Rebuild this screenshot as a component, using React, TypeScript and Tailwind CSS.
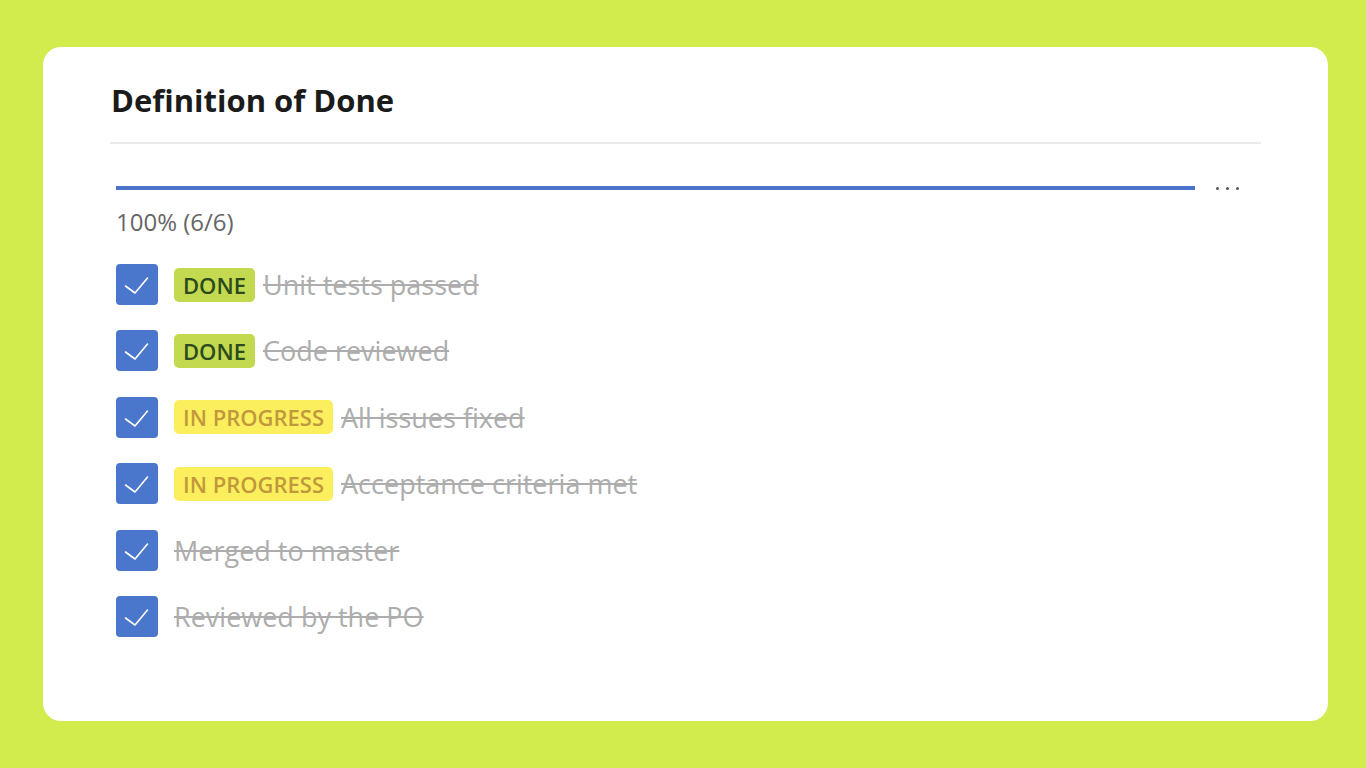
import React from 'react';

type Item = { label: string; status?: 'done' | 'progress' };

const items: Item[] = [
  { label: 'Unit tests passed', status: 'done' },
  { label: 'Code reviewed', status: 'done' },
  { label: 'All issues fixed', status: 'progress' },
  { label: 'Acceptance criteria met', status: 'progress' },
  { label: 'Merged to master' },
  { label: 'Reviewed by the PO' },
];

const CheckBox: React.FC = () => (
  <div className="w-[42px] h-[41px] rounded-[4px] bg-[#4a76cc] shrink-0">
    <svg width="42" height="41" viewBox="0 0 42 41" fill="none">
      <path d="M9.5 22 L19 29 L31.5 14" stroke="white" strokeWidth="1.6" strokeLinecap="round" strokeLinejoin="round" />
    </svg>
  </div>
);

const Badge: React.FC<{ status: 'done' | 'progress' }> = ({ status }) =>
  status === 'done' ? (
    <span className="h-[34px] px-[9px] flex items-center rounded-[5px] bg-[#c3d94f] text-[#2c4a1c] text-[22px] font-semibold leading-none">
      DONE
    </span>
  ) : (
    <span className="h-[34px] px-[9px] flex items-center rounded-[5px] bg-[#fbef5d] text-[#c2983c] text-[22px] font-semibold leading-none">
      IN PROGRESS
    </span>
  );

const App: React.FC = () => {
  return (
    <div
      className="min-h-screen bg-[#d2eb4d] pt-[47px] pl-[43px] pr-[38px] pb-[47px]"
      style={{ fontFamily: '"Open Sans", "Noto Sans", sans-serif' }}
    >
      <div className="w-full h-[674px] bg-white rounded-[18px] px-[67px] pt-[38px]">
        <h2 className="text-[31px] font-bold leading-none text-[#1b1b1b] pl-[1px]">Definition of Done</h2>
        <div className="mt-[26px] h-[2px] bg-[#ebebeb]" />

        <div className="pl-[6px]">
          {/* progress */}
          <div className="mt-[42px] flex items-center">
            <div className="flex-1 h-[4px] bg-[#4a74c9]" />
            <div className="flex gap-[7px] ml-[21px] mr-[22px]">
              <span className="w-[3px] h-[3px] rounded-full bg-[#555]" />
              <span className="w-[3px] h-[3px] rounded-full bg-[#555]" />
              <span className="w-[3px] h-[3px] rounded-full bg-[#555]" />
            </div>
          </div>
          <p className="mt-[20px] text-[24px] leading-none text-[#666]">100% (6/6)</p>

          <ul className="mt-[30px] flex flex-col gap-[25.4px]">
            {items.map((item) => (
              <li key={item.label} className="h-[41px] flex items-center">
                <CheckBox />
                <div className="ml-[16px] flex items-center gap-[8px]">
                  {item.status && <Badge status={item.status} />}
                  <span className="text-[27px] leading-none text-[#adadad] line-through">{item.label}</span>
                </div>
              </li>
            ))}
          </ul>
        </div>
      </div>
    </div>
  );
};

export default App;
